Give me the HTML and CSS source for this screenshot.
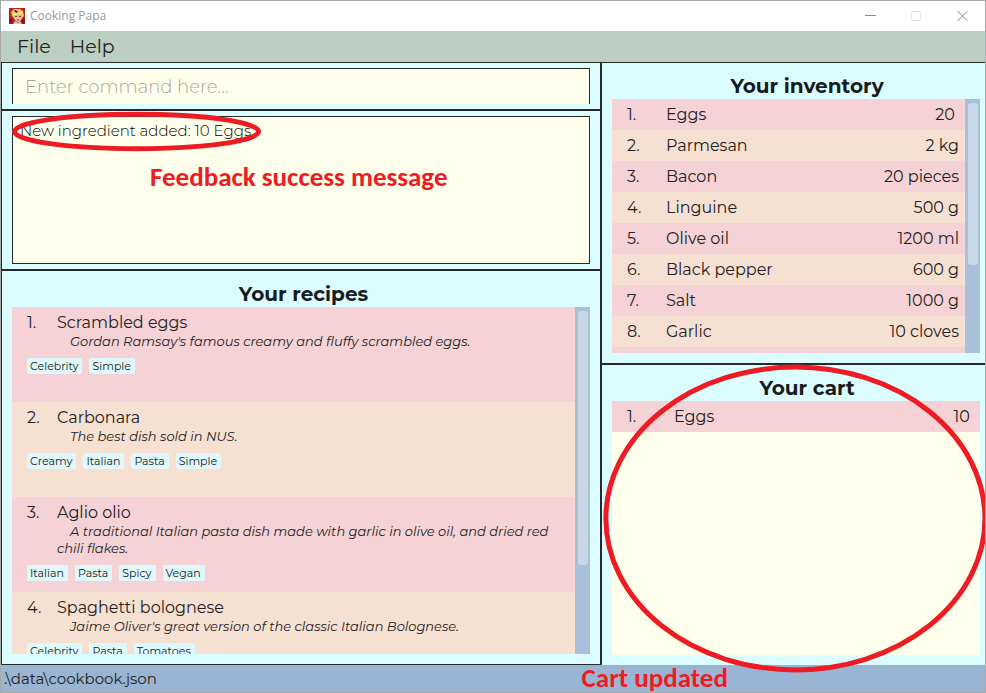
FILE: index.html
```html
<!DOCTYPE html>
<html lang="en">
<head>
<meta charset="utf-8">
<title>Cooking Papa</title>
<link rel="stylesheet" href="styles.css">
</head>
<body>
<div class="window">
  <header class="titlebar">
    <svg class="app-icon" viewBox="0 0 16 16" aria-hidden="true">
      <rect width="16" height="16" fill="#b8231f"/>
      <path d="M0 10l4 1v5H0zM13 10l3 1v5h-4z" fill="#8e1a1d"/>
      <path d="M2 4l3-3 6 0 3 2 1 5-2 2-8 0-2-2z" fill="#f0c860"/>
      <path d="M5 7l8-1 0 5-3 3H8l-3-3z" fill="#eeb98b"/>
      <path d="M4 4l4 1 5-2 1 3-5 0-5 2z" fill="#f8e08a"/>
      <path d="M5 2l2 0 2 2-2 1z" fill="#3a2a20"/>
      <path d="M6 8.500h2M10 8.500h2M8 12h2" stroke="#7a3d2a" fill="none"/>
      <path d="M4 16l2-3 3 2 2-2 2 3z" fill="#d9cdb5"/>
    </svg>
    <h1 class="app-name">Cooking Papa</h1>
    <div class="window-controls">
      <button class="control" type="button" aria-label="Minimize"><svg viewBox="0 0 11 11"><path d="M0 4.500h11" stroke="#8a8a8a"/></svg></button>
      <button class="control" type="button" aria-label="Maximize" disabled><svg viewBox="0 0 11 11"><path d="M.5 .5h9v9h-9z" stroke="#e4e4e4"/></svg></button>
      <button class="control" type="button" aria-label="Close"><svg viewBox="0 0 11 11"><path d="M.5 0l10 10M10.500 0l-10 10" stroke="#858585"/></svg></button>
    </div>
  </header>
  <nav class="menubar">
    <button class="menu" type="button">File</button>
    <button class="menu" type="button">Help</button>
  </nav>
  <main class="content">
    <div class="column column-left">
      <section class="command">
        <input class="command-input" type="text" aria-label="Command" placeholder="Enter command here...">
      </section>
      <section class="result">
        <div class="result-box">
          <p class="result-text">New ingredient added: 10 Eggs</p>
          <svg class="ring ring-result" aria-hidden="true"><ellipse cx="50%" cy="50%" rx="49%" ry="44%"/></svg>
          <p class="note note-result">Feedback success message</p>
        </div>
      </section>
      <section class="panel recipes">
        <h2 class="panel-title">Your recipes</h2>
        <div class="list">
          <ol class="list-body recipe-list">
            <li class="recipe">
              <h3 class="recipe-name"><span class="recipe-index">1.</span>Scrambled eggs</h3>
              <p class="recipe-text">Gordan Ramsay's famous creamy and fluffy scrambled eggs.</p>
              <div class="tags"><span class="tag">Celebrity</span><span class="tag">Simple</span></div>
            </li>
            <li class="recipe">
              <h3 class="recipe-name"><span class="recipe-index">2.</span>Carbonara</h3>
              <p class="recipe-text">The best dish sold in NUS.</p>
              <div class="tags"><span class="tag">Creamy</span><span class="tag">Italian</span><span class="tag">Pasta</span><span class="tag">Simple</span></div>
            </li>
            <li class="recipe">
              <h3 class="recipe-name"><span class="recipe-index">3.</span>Aglio olio</h3>
              <p class="recipe-text">A traditional Italian pasta dish made with garlic in olive oil, and dried red chili flakes.</p>
              <div class="tags"><span class="tag">Italian</span><span class="tag">Pasta</span><span class="tag">Spicy</span><span class="tag">Vegan</span></div>
            </li>
            <li class="recipe">
              <h3 class="recipe-name"><span class="recipe-index">4.</span>Spaghetti bolognese</h3>
              <p class="recipe-text">Jaime Oliver's great version of the classic Italian Bolognese.</p>
              <div class="tags"><span class="tag">Celebrity</span><span class="tag">Pasta</span><span class="tag">Tomatoes</span></div>
            </li>
          </ol>
          <div class="scrollbar"><div class="thumb thumb-recipes"></div></div>
        </div>
      </section>
    </div>
    <div class="column column-right">
      <section class="panel inventory">
        <h2 class="panel-title">Your inventory</h2>
        <div class="list">
          <div class="list-body">
            <table class="items">
              <tbody>
                <tr><td class="index">1.</td><td>Eggs</td><td class="amount">20&nbsp;</td></tr>
                <tr><td class="index">2.</td><td>Parmesan</td><td class="amount">2 kg</td></tr>
                <tr><td class="index">3.</td><td>Bacon</td><td class="amount">20 pieces</td></tr>
                <tr><td class="index">4.</td><td>Linguine</td><td class="amount">500 g</td></tr>
                <tr><td class="index">5.</td><td>Olive oil</td><td class="amount">1200 ml</td></tr>
                <tr><td class="index">6.</td><td>Black pepper</td><td class="amount">600 g</td></tr>
                <tr><td class="index">7.</td><td>Salt</td><td class="amount">1000 g</td></tr>
                <tr><td class="index">8.</td><td>Garlic</td><td class="amount">10 cloves</td></tr>
                <tr><td class="index"></td><td></td><td class="amount"></td></tr>
              </tbody>
            </table>
          </div>
          <div class="scrollbar"><div class="thumb thumb-inventory"></div></div>
        </div>
      </section>
      <section class="panel cart">
        <h2 class="panel-title">Your cart</h2>
        <div class="list">
          <div class="list-body">
            <table class="items items-cart">
              <tbody>
                <tr><td class="index">1.</td><td>Eggs</td><td class="amount">10&nbsp;</td></tr>
              </tbody>
            </table>
          </div>
        </div>
        <svg class="ring ring-cart" aria-hidden="true"><ellipse cx="50%" cy="50%" rx="49%" ry="49%"/></svg>
      </section>
    </div>
  </main>
  <footer class="statusbar">
    <span>.\data\cookbook.json</span>
    <p class="note note-cart">Cart updated</p>
  </footer>
</div>
</body>
</html>
```
FILE: styles.css
```css
:root {
  --ink: #262a2c;
  --aqua: #dcfdff;
  --cream: #ffffeb;
  --pink: #f4d2d5;
  --peach: #f6e0d2;
  --red: #ed1c24;
}

* {
  box-sizing: border-box;
}

body {
  margin: 0;
  font-family: Montserrat, Inter, "Open Sans", sans-serif;
  font-size: 16px;
  line-height: 20px;
  color: #222;
}

h1, h2, h3, p, ol {
  margin: 0;
  padding: 0;
}

button {
  border: 0;
  background: none;
  font: inherit;
  color: inherit;
}

.window {
  display: flex;
  flex-direction: column;
  height: 100vh;
  border: 1px solid #a9a9a9;
  overflow: hidden;
}

.titlebar {
  display: flex;
  align-items: center;
  flex: none;
  height: 30px;
  padding-left: 8px;
  background: #fff;
}

.app-icon {
  width: 16px;
  height: 16px;
}

.app-name {
  margin-left: 5px;
  font: 400 12px/16px "Open Sans", sans-serif;
  color: #999;
}

.window-controls {
  display: flex;
  margin-left: auto;
}

.control {
  display: grid;
  place-items: center;
  width: 46px;
  height: 29px;
  padding: 0;
}

.control svg {
  width: 11px;
  height: 11px;
  fill: none;
}

.menubar {
  display: flex;
  flex: none;
  gap: 19px;
  height: 32px;
  padding: 0 16px;
  border-bottom: 1px solid var(--ink);
  background: #bccfc3;
}

.menu {
  padding: 0;
  font-size: 19px;
}

.content {
  display: grid;
  grid-template-columns: minmax(0, 601fr) minmax(0, 383fr);
  flex: 1;
  min-height: 0;
  background: var(--aqua);
}

.column {
  display: flex;
  flex-direction: column;
  min-height: 0;
}

.column-left {
  border-left: 1px solid var(--ink);
  border-right: 2px solid var(--ink);
  border-bottom: 1px solid var(--ink);
}

.command,
.result {
  flex: none;
  padding: 5px 10px;
  border-bottom: 2px solid var(--ink);
}

.command-input {
  display: block;
  width: 100%;
  height: 36px;
  padding: 0 12px;
  border: 1px solid var(--ink);
  border-bottom: 0;
  border-radius: 0;
  outline: 0;
  background: var(--cream);
  font: inherit;
  font-size: 18px;
  font-weight: 300;
}

.command-input::placeholder {
  color: #a6a69e;
}

.result-box {
  position: relative;
  height: 148px;
  padding: 4px 7px;
  border: 1px solid var(--ink);
  background: var(--cream);
}

.result-text {
  font-size: 15px;
  font-weight: 300;
  color: #000;
}

.panel {
  position: relative;
  display: flex;
  flex: 1;
  flex-direction: column;
  min-height: 0;
  padding: 10px 5px 10px 10px;
}

.recipes {
  padding-right: 10px;
}

.inventory {
  border-bottom: 2px solid var(--ink);
}

.cart {
  z-index: 1;
}

.panel-title {
  flex: none;
  padding-left: 22px;
  font-size: 20px;
  line-height: 26px;
  font-weight: 700;
  text-align: center;
  color: #181c1e;
}

.recipes .panel-title {
  padding-left: 5px;
}

.list {
  display: flex;
  flex: 1;
  min-height: 0;
  background: var(--cream);
}

.list-body {
  flex: 1;
  min-width: 0;
  overflow: hidden;
}

.recipe-list {
  list-style: none;
}

.scrollbar {
  flex: none;
  width: 15px;
  padding: 4px 2px 4px 3px;
  background: #aac0da;
}

.thumb {
  border-radius: 3px;
  background: #c8d8e9;
}

.thumb-recipes {
  height: 75%;
}

.thumb-inventory {
  height: 66%;
}

.recipe {
  min-height: 95px;
  padding: 6px 15px 4px;
  background: var(--pink);
}

.recipe:nth-child(even) {
  background: var(--peach);
}

.recipe-name {
  display: flex;
  font-size: 16px;
  font-weight: 400;
}

.recipe-index {
  width: 30px;
}

.recipe-text {
  margin-left: 30px;
  font-size: 13px;
  line-height: 17px;
  font-style: italic;
  text-indent: 13px;
}

.tags {
  display: flex;
  gap: 7px;
  margin-top: 8px;
}

.tag {
  padding: 0 4px 0 3px;
  border-radius: 2px;
  background: #dff8fc;
  font-size: 11px;
  line-height: 16px;
}

.items {
  width: 100%;
  border-collapse: collapse;
}

.items tr {
  height: 31px;
  background: var(--pink);
}

.items tr:nth-child(even) {
  background: var(--peach);
}

.items td {
  padding: 0;
}

.items .index {
  width: 54px;
  padding-left: 15px;
}

.items-cart .index {
  width: 62px;
}

.items .amount {
  padding-right: 6px;
  text-align: right;
}

.statusbar {
  position: relative;
  flex: none;
  height: 27px;
  padding: 4px 3px;
  background: #9ab5d3;
  font-size: 15px;
}

.ring {
  position: absolute;
  overflow: visible;
  fill: none;
  stroke: var(--red);
  stroke-width: 5px;
}

.ring-result {
  top: -5px;
  left: -1px;
  width: 249px;
  height: 39px;
}

.ring-cart {
  top: -1px;
  left: 0;
  width: 101%;
  height: 103%;
}

.note {
  position: absolute;
  font: 700 27px/26px Calibri, Carlito, Lato, sans-serif;
  white-space: nowrap;
  color: var(--red);
}

.note-result {
  top: 47px;
  left: 137px;
}

.note-cart {
  top: 0;
  left: 59%;
}
```
